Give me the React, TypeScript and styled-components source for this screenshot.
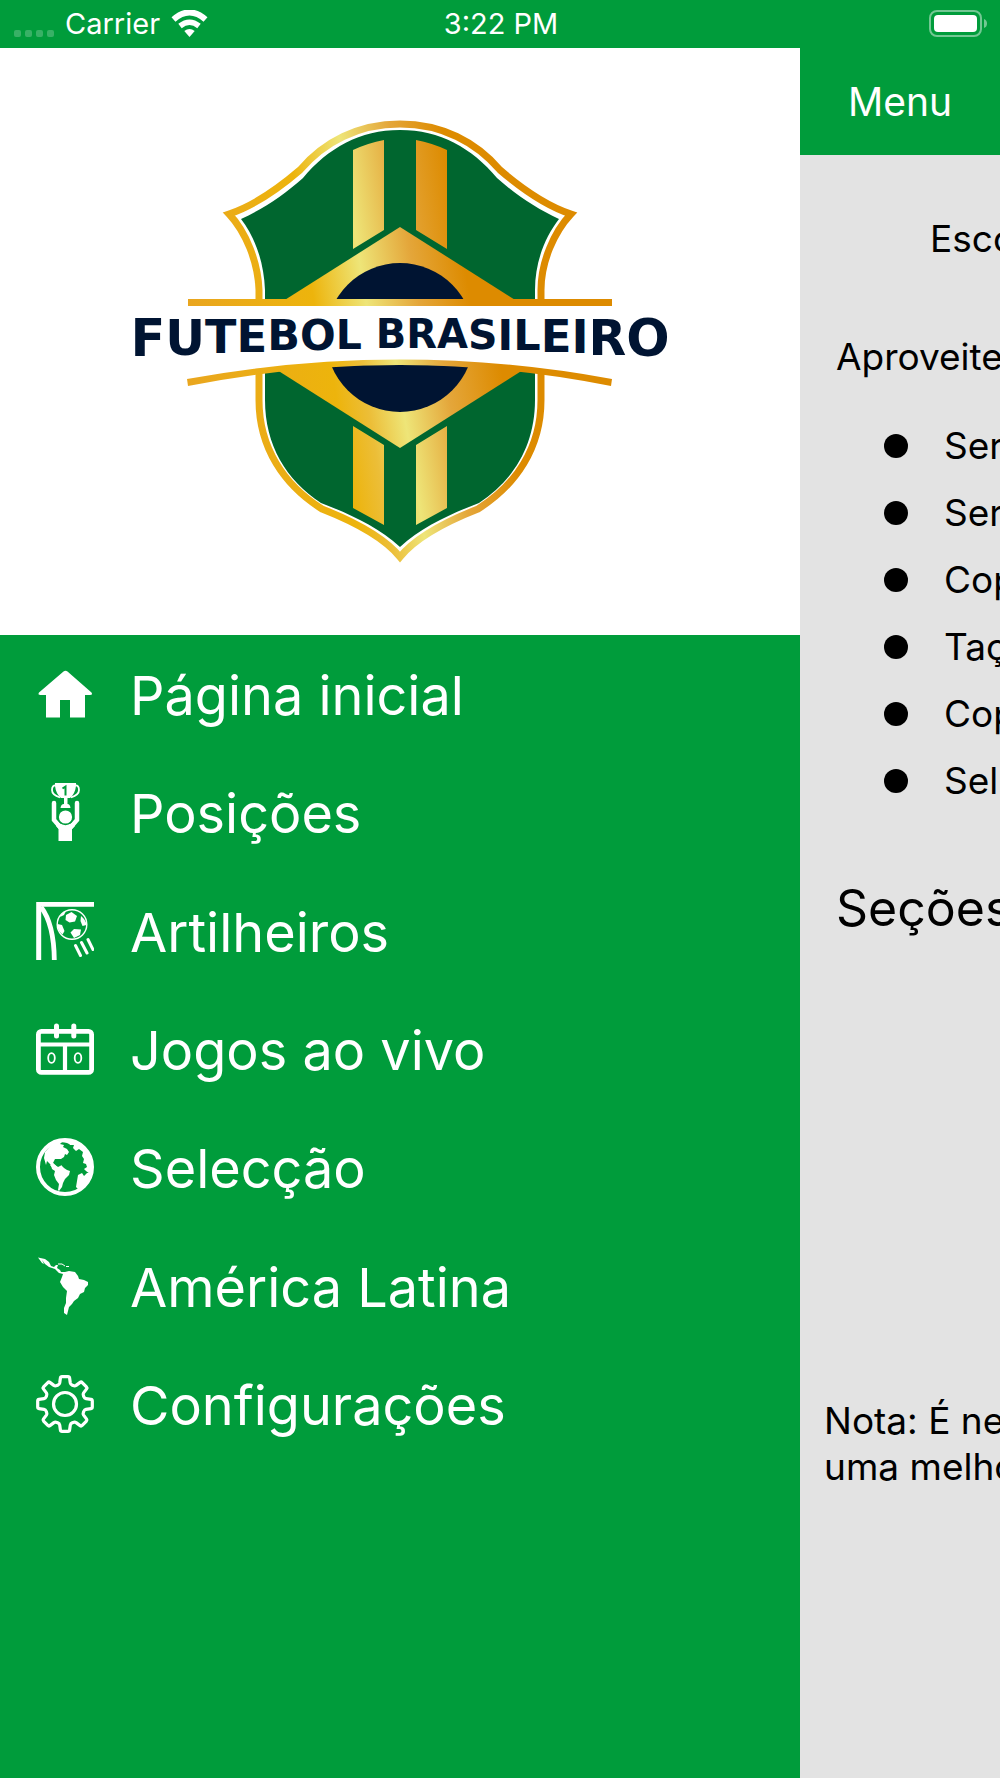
import React from "react";
import styled, { createGlobalStyle } from "styled-components";

const green = "#009c3b";
const sans = `Inter, "Liberation Sans", sans-serif`;

const GlobalStyle = createGlobalStyle`
  * { box-sizing: border-box; }
  body { margin: 0; background: #e3e3e3; font-family: ${sans}; }
  h1, h2, p, ul { margin: 0; padding: 0; font-weight: 400; }
  ul { list-style: none; }
`;

const Screen = styled.div`
  display: flex;
  flex-direction: column;
  min-height: 100vh;
  overflow: hidden;
`;

const StatusBar = styled.header`
  display: grid;
  grid-template-columns: 1fr auto 1fr;
  align-items: center;
  height: 48px;
  padding: 0 12px 0 14px;
  background: ${green};
  color: #fff;
  font-size: 29px;
  line-height: 32px;
`;

const StatusGroup = styled.div<{ $end?: boolean }>`
  display: flex;
  align-items: center;
  justify-content: ${(p) => (p.$end ? "flex-end" : "flex-start")};
  gap: 11px;
`;

const SignalDots = styled.div`
  display: flex;
  gap: 4px;
  padding-top: 18px;
`;

const Dot = styled.span`
  width: 7px;
  height: 7px;
  border-radius: 2px;
  background: rgba(255, 255, 255, 0.22);
`;

const Body = styled.div`
  display: flex;
  flex: 1;
`;

const Drawer = styled.aside`
  flex: 0 0 80%;
  background: ${green};
`;

const LogoPanel = styled.div`
  display: flex;
  justify-content: center;
  padding: 62px 0;
  background: #fff;
`;

const Logo = styled.svg`
  display: block;
  width: 70%;
  height: auto;
`;

const MenuList = styled.ul`
  display: grid;
  grid-auto-rows: 1fr;
  height: 828px;
`;

const MenuLink = styled.a`
  display: flex;
  align-items: center;
  gap: 36px;
  height: 100%;
  padding: 0 36px;
  color: #fff;
  font-size: 54px;
  line-height: 68px;
  text-decoration: none;
  white-space: nowrap;
`;

const MenuLabel = styled.span`
  padding-top: 4px;
`;

const MenuIcon = styled.svg`
  flex: none;
  width: 58px;
  height: 58px;
`;

const Main = styled.main`
  flex: 1;
  min-width: 0;
  overflow: hidden;
  white-space: nowrap;
  color: #000;
  font-size: 37px;
  line-height: 46px;
`;

const TitleBar = styled.div`
  display: flex;
  align-items: center;
  height: 107px;
  padding-left: 48px;
  background: ${green};
  color: #fff;
`;

const Title = styled.h1`
  font-size: 39px;
  line-height: 48px;
`;

const Choose = styled.p`
  padding: 61px 0 0 130px;
`;

const Enjoy = styled.p`
  padding: 72px 0 0 36px;
`;

const Leagues = styled.ul`
  padding: 32px 0 0 84px;
`;

const League = styled.li`
  display: flex;
  align-items: center;
  gap: 36px;
  height: 67px;
`;

const Bullet = styled.span`
  flex: none;
  width: 24px;
  height: 24px;
  border-radius: 50%;
  background: #000;
`;

const Sections = styled.h2`
  padding: 64px 0 0 36px;
  font-size: 50px;
  line-height: 60px;
`;

const Note = styled.p`
  padding: 460px 0 0 24px;
`;

const WifiIcon = () => (
  <svg width="37" height="28" viewBox="0 0 37 28" fill="none" stroke="#fff" aria-hidden="true">
    <path d="M2.5 9.5Q18.500-4.500 34.500 9.500" strokeWidth="6" />
    <path d="M9 16Q18.500 8.500 28 16" strokeWidth="5.500" />
    <path d="M13.300 21Q18.500 17 23.700 21L18.500 27Z" fill="#fff" stroke="none" />
  </svg>
);

const BatteryIcon = () => (
  <svg width="59" height="28" viewBox="0 0 59 28" aria-hidden="true">
    <rect x="1" y="1" width="51" height="25" rx="7" fill="none" stroke="#fff" strokeOpacity=".45" strokeWidth="2" />
    <rect x="5" y="5" width="43" height="17" rx="4" fill="#fff" />
    <path d="M55 9Q58 10 58 13.500T55 18Z" fill="#fff" fillOpacity=".45" />
  </svg>
);

const HomeIcon = () => (
  <MenuIcon viewBox="0 0 58 58" fill="#fff" aria-hidden="true">
    <path d="M27.500 6.500Q29.500 4.800 31.500 6.500L55.500 27.500Q57 30 54 30H49V52.500H34V35H24V52.500H10V30H4.500Q1.500 30 3 27.500Z" />
  </MenuIcon>
);

const TrophyIcon = () => (
  <MenuIcon viewBox="0 0 58 58" fill="#fff" aria-hidden="true">
    <path d="M19 0H40V3Q39 11 34 15H31.500V21Q34 21 34.500 25H24.500Q25 21 28 21V15H25Q20 11 19 3Z" />
    <path d="M20 2.500Q16 2 16 7T24 14.500M39 2.500Q43 2 43 7T35 14.500" fill="none" stroke="#fff" strokeWidth="1.800" />
    <path d="M26.500 5.500L29.500 3.500V12.500" fill="none" stroke={green} strokeWidth="2" />
    <path d="M18 20V37L25 45M41 20V37L34 45" fill="none" stroke="#fff" strokeWidth="4.500" strokeLinecap="round" />
    <path d="M20 38L25 41H34L39 38L39 43L36 46V58H22.500V46L20 43Z" />
    <circle cx="29.500" cy="34" r="7.400" stroke={green} strokeWidth="1.600" />
  </MenuIcon>
);

const GoalIcon = () => (
  <MenuIcon viewBox="0 0 58 58" fill="none" stroke="#fff" aria-hidden="true">
    <path d="M58 2.300H2.700V58" strokeWidth="5" />
    <path d="M5 5Q18 22 18.300 58" strokeWidth="4.800" />
    <circle cx="36" cy="22.500" r="14.800" strokeWidth="1.400" />
    <g fill="#fff" stroke="none">
      <path d="M30 13L35.500 10L41 14L39 19.500L33.500 20.500L29.500 18Z" />
      <path d="M45 14Q50 18 50.500 23L46.500 24L44.500 19Z" />
      <path d="M34.500 30.500L38 27L45 27.500L44 33L38 36Z" />
      <path d="M21.500 22L26 23L28.500 29L26.500 32.500Q21 28 21.500 22Z" />
      <path d="M24 15Q26 10.500 30 9L28 13Z" />
    </g>
    <path d="M39.500 43.500L44.500 53.500M45.500 40.500L51 51M52 37.500L57 47.500" strokeWidth="3" strokeLinecap="round" />
  </MenuIcon>
);

const CalendarIcon = () => (
  <MenuIcon viewBox="0 0 58 58" fill="none" stroke="#fff" aria-hidden="true">
    <rect x="2.400" y="11.400" width="53.200" height="41" rx="3" strokeWidth="4.800" />
    <path d="M2 24.500H56M29 25V52" strokeWidth="4.200" />
    <path d="M20.500 6V16M37.800 6V16" strokeWidth="5" strokeLinecap="round" />
    <ellipse cx="15.500" cy="38" rx="3.300" ry="4.800" strokeWidth="1.800" />
    <ellipse cx="42" cy="38" rx="3.300" ry="4.800" strokeWidth="1.800" />
  </MenuIcon>
);

const GlobeIcon = () => (
  <MenuIcon viewBox="0 0 58 58" fill="#fff" aria-hidden="true">
    <circle cx="29" cy="29" r="27" fill="none" stroke="#fff" strokeWidth="4" />
    <path d="M9 14L16 6L28 2H38L39 5L35 7L31 5L26 4L24 6L28 7L27 9L31 11L33 14L31 17L29 16L28 19L25 21L24 23L20 23L19 26L21 28L25 26L26 28L28 30L31 32L34 33L33 37L29 41L27 45L26 49L23 53L22 52L23 46L20 42L18 37L19 33L16 31L15 27L11 23L10 27L8 20Z" />
    <path d="M19 21L25 21L28 25L29 29L26 27L22 29L17 25Z" fill={green} />
    <path d="M17 25Q20 30 27 31L26 33L18 32L14 27Z" />
    <path d="M33 4L39 3L47 8L53 15L57 25V35L54 36L50 33L48 31L51 29L50 26L47 25L48 21L46 18L47 14L43 11L40 13L37 10L38 7L34 7Z" />
    <path d="M42 37L46 35L48 38L51 35L55 35L53 42L48 48L43 52L40 49L41 43Z" />
  </MenuIcon>
);

const LatinAmericaIcon = () => (
  <MenuIcon viewBox="0 0 58 58" fill="#fff" aria-hidden="true">
    <path d="M2 .5L9 2L13 5L15 9L18 10L20 8L22 8L21 11L24 13L25 15L29 15L33 14L39 15L42 19L43 22L48 23L52 25L52 28L49 31L48 35L44 37L42 41L38 44L36 47L33 50L32 54L31 58L28 56L28 51L30 46L30 41L31 34L27 30L24 25L26 20L27 17L23 16L19 12L13 10L9 7L6 3L8 7L6 6Z" />
    <path d="M22 7L26 7L29 9M30 9.500H33" fill="none" stroke="#fff" strokeWidth="1" />
  </MenuIcon>
);

const gearTooth = (i: number) => {
  const a = (i * Math.PI) / 4;
  const at = (x: number, y: number) =>
    `${(29 + x * Math.cos(a) - y * Math.sin(a)).toFixed(2)} ${(29 + x * Math.sin(a) + y * Math.cos(a)).toFixed(2)}`;
  return [
    `${i ? "L" : "M"}${at(-7.3, -18.8)}`,
    `Q${at(-5.6, -19.5)} ${at(-5.3, -21)}`,
    `L${at(-4.6, -26)}`,
    `Q${at(-4.4, -27.3)} ${at(-3, -27.3)}`,
    `L${at(3, -27.3)}`,
    `Q${at(4.4, -27.3)} ${at(4.6, -26)}`,
    `L${at(5.3, -21)}`,
    `Q${at(5.6, -19.5)} ${at(7.3, -18.8)}`,
  ].join("");
};
const gearPath = Array.from({ length: 8 }, (_, i) => gearTooth(i)).join("") + "Z";

const GearIcon = () => (
  <MenuIcon viewBox="0 0 58 58" fill="none" stroke="#fff" strokeWidth="3.200" strokeLinejoin="round" aria-hidden="true">
    <path d={gearPath} />
    <circle cx="29" cy="29" r="11.500" />
  </MenuIcon>
);

const shieldTop =
  "M259 306V290C258 262 246 232 229 214C256 205 279 188 300 170C324 142 358 124 400 124S476 142 500 170C521 188 544 205 571 214C554 232 541 262 541 290V306Z";
const shieldBottom =
  "M259 360V400C259 448 284 485 322 509C350 520 383 536 400 557C417 536 450 520 478 509C516 485 541 448 541 400V360Q400 350 259 360Z";

/* The lettering is tallest at both ends of the banner and lowest in its middle. */
const letters = Array.from("FUTEBOL BRASILEIRO");
const letterSize = (i: number) => Math.round(40 + 11 * Math.pow(Math.abs(i - 8.5) / 8.5, 2));
const letterDrop = (i: number) => (i < 0 ? 0 : Math.round(letterSize(i) * 0.729));

const BrandLogo = () => (
  <Logo viewBox="120 110 560 463" role="img" aria-label="Futebol Brasileiro">
    <defs>
      <linearGradient id="goldTop" gradientUnits="userSpaceOnUse" x1="188" y1="330" x2="612" y2="260">
        <stop offset="0" stopColor="#e9a520" />
        <stop offset=".3" stopColor="#edb40c" />
        <stop offset=".42" stopColor="#eee578" />
        <stop offset=".54" stopColor="#e4a63a" />
        <stop offset=".66" stopColor="#dd8b00" />
        <stop offset="1" stopColor="#dd8b00" />
      </linearGradient>
      <linearGradient id="goldBottom" gradientUnits="userSpaceOnUse" x1="188" y1="450" x2="612" y2="380">
        <stop offset="0" stopColor="#e9a520" />
        <stop offset=".36" stopColor="#edb40c" />
        <stop offset=".43" stopColor="#ecbe38" />
        <stop offset=".51" stopColor="#eee578" />
        <stop offset=".62" stopColor="#e4a63a" />
        <stop offset=".75" stopColor="#dd8b00" />
        <stop offset="1" stopColor="#dd8b00" />
      </linearGradient>
      <clipPath id="upperHalf"><path d="M120 110H680V303H120Z" /></clipPath>
      <clipPath id="lowerHalf"><path d="M120 380Q400 350 680 380V573H120Z" /></clipPath>
    </defs>

    <g clipPath="url(#upperHalf)">
      <path d={shieldTop} fill="#fff" stroke="url(#goldTop)" strokeWidth="7" />
      <path d="M265 306V290C264 262 255 237 241 219C263 209 284 195 303 178C328 148 360 130 400 130S472 148 497 178C516 195 537 209 559 219C545 237 535 262 535 290V306Z" fill="#00662f" />
      <path d="M353 150Q368 143 384 140V230L353 249ZM416 140Q432 143 447 150V249L416 230Z" fill="url(#goldTop)" />
      <path d="M400 227L520 303H280Z" fill="url(#goldTop)" />
      <circle cx="400" cy="337" r="74" fill="#001432" />
    </g>
    <path d="M188 299H612V306H188Z" fill="url(#goldTop)" />

    <g clipPath="url(#lowerHalf)">
      <path d={shieldBottom} fill="#fff" stroke="url(#goldBottom)" strokeWidth="7" />
      <path d="M265 360V400C265 445 286 480 321 503C350 514 378 527 400 547C422 527 450 514 479 503C514 480 535 445 535 400V360Z" fill="#00662f" />
      <path d="M353 426L384 445V525L353 508ZM447 426L416 445V525L447 508Z" fill="url(#goldBottom)" />
      <path d="M266 363L400 448L534 363Z" fill="url(#goldBottom)" />
      <circle cx="400" cy="338" r="74" fill="#001432" />
    </g>
    <path d="M187 379Q400 340 612 379L611 386Q400 344 188 386Z" fill="url(#goldBottom)" />

    <text
      x="400"
      y="319"
      textAnchor="middle"
      fill="#001432"
      fontFamily={`"DejaVu Sans", sans-serif`}
      fontWeight="700"
    >
      {letters.map((letter, i) => (
        <tspan key={i} fontSize={letterSize(i)} dy={letterDrop(i) - letterDrop(i - 1)}>
          {letter === " " ? "\u00a0" : letter}
        </tspan>
      ))}
    </text>
  </Logo>
);

const menuItems = [
  { label: "Página inicial", Icon: HomeIcon },
  { label: "Posições", Icon: TrophyIcon },
  { label: "Artilheiros", Icon: GoalIcon },
  { label: "Jogos ao vivo", Icon: CalendarIcon },
  { label: "Selecção", Icon: GlobeIcon },
  { label: "América Latina", Icon: LatinAmericaIcon },
  { label: "Configurações", Icon: GearIcon },
];

const leagues = ["Ser", "Ser", "Cop", "Taç", "Cop", "Sel"];

export default function App() {
  return (
    <>
      <GlobalStyle />
      <Screen>
        <StatusBar>
          <StatusGroup>
            <SignalDots>
              {[0, 1, 2, 3].map((n) => (
                <Dot key={n} />
              ))}
            </SignalDots>
            <span>Carrier</span>
            <WifiIcon />
          </StatusGroup>
          <span>3:22 PM</span>
          <StatusGroup $end>
            <BatteryIcon />
          </StatusGroup>
        </StatusBar>
        <Body>
          <Drawer>
            <LogoPanel>
              <BrandLogo />
            </LogoPanel>
            <nav>
              <MenuList>
                {menuItems.map(({ label, Icon }) => (
                  <li key={label}>
                    <MenuLink href="#">
                      <Icon />
                      <MenuLabel>{label}</MenuLabel>
                    </MenuLink>
                  </li>
                ))}
              </MenuList>
            </nav>
          </Drawer>
          <Main>
            <TitleBar>
              <Title>Menu</Title>
            </TitleBar>
            <Choose>Esco</Choose>
            <Enjoy>Aproveite</Enjoy>
            <Leagues>
              {leagues.map((name, i) => (
                <League key={i}>
                  <Bullet />
                  <span>{name}</span>
                </League>
              ))}
            </Leagues>
            <Sections>Seções</Sections>
            <Note>
              Nota: É ne
              <br />
              uma melho
            </Note>
          </Main>
        </Body>
      </Screen>
    </>
  );
}
